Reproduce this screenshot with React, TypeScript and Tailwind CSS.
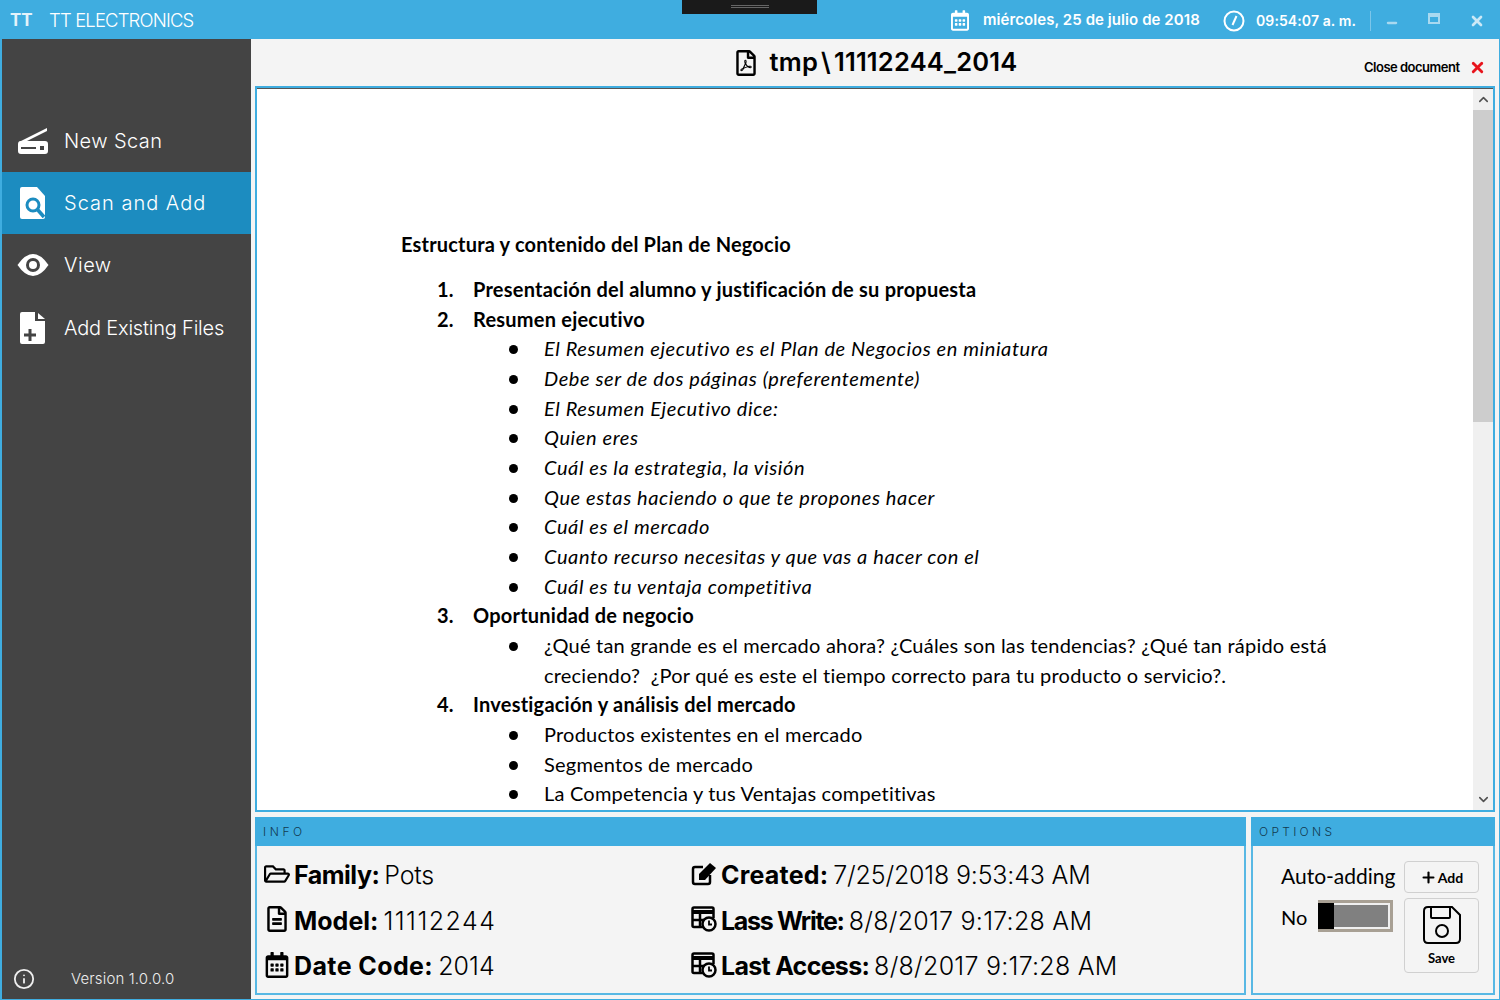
import React from 'react';
import { FaRegFolderOpen, FaRegFileAlt, FaRegCalendarAlt, FaRegFilePdf } from 'react-icons/fa';
import { ChevronUp, ChevronDown, Minus, X, Plus, Info } from 'lucide-react';

const gothic = { fontFamily: 'Inter, "Noto Sans", sans-serif' };

function ScannerIcon() {
  return (
    <svg viewBox="0 0 32 28" className="w-8 h-7" fill="white">
      <path d="M2 15 L30 1 V4 L8 15 Z" />
      <path fillRule="evenodd" d="M4 14 H28 Q31 14 31 17 V24 Q31 27 28 27 H4 Q1 27 1 24 V17 Q1 14 4 14 Z M4 20 V22 H19 V20 Z M23 19 V23 H27 V19 Z" />
    </svg>
  );
}

function FileSearchIcon() {
  return (
    <svg viewBox="0 0 26 32" className="w-[26px] h-8">
      <path d="M2 0 H17 L25 9 V30 Q25 32 23 32 H2 Q0 32 0 30 V2 Q0 0 2 0 Z" fill="white" />
      <circle cx="13" cy="18" r="6" fill="none" stroke="#1c8cc0" strokeWidth="3" />
      <path d="M17 22 L24 30" stroke="#1c8cc0" strokeWidth="3.5" />
    </svg>
  );
}

function EyeIcon() {
  return (
    <svg viewBox="0 0 32 22" className="w-8 h-[22px]">
      <path d="M0.5 11 Q8 0 16 0 Q24 0 31.5 11 Q24 22 16 22 Q8 22 0.5 11 Z" fill="white" />
      <circle cx="16" cy="11" r="7" fill="#444444" />
      <circle cx="16" cy="11" r="4" fill="white" />
    </svg>
  );
}

function FilePlusIcon() {
  return (
    <svg viewBox="0 0 26 32" className="w-[26px] h-8">
      <path d="M2 0 H15 V9 H25 V30 Q25 32 23 32 H2 Q0 32 0 30 V2 Q0 0 2 0 Z" fill="white" />
      <path d="M18 1 L25 7 H18 Z" fill="white" />
      <path d="M10 17 V29 M4 23 H16" stroke="#444444" strokeWidth="3" />
    </svg>
  );
}

function EditIcon() {
  return (
    <svg viewBox="0 0 26 24" className="w-[26px] h-[24px]">
      <path d="M12 5 H4 Q2 5 2 7 V20 Q2 22 4 22 H17 Q19 22 19 20 V13" fill="none" stroke="black" strokeWidth="2.5" />
      <path d="M8 12 L19 1 L25 6 L14 18 H8 Z" fill="black" />
    </svg>
  );
}

function TableClockIcon() {
  return (
    <svg viewBox="0 0 26 26" className="w-[26px] h-[26px]" fill="none" stroke="black">
      <path d="M12 21 H3 Q1.5 21 1.5 19.5 V3 Q1.5 1.5 3 1.5 H21 Q22.5 1.5 22.5 3 V12" strokeWidth="2.5" />
      <path d="M1.5 6 H22.5" strokeWidth="4" />
      <path d="M1.5 14 H13 M9 8 V21" strokeWidth="2.5" />
      <circle cx="18" cy="18" r="6.5" fill="#f4f4f4" strokeWidth="2.5" />
      <path d="M18 14.5 V18.5 H21" strokeWidth="1.8" />
    </svg>
  );
}

function SaveIcon() {
  return (
    <svg viewBox="0 0 38 38" className="w-[38px] h-[38px]" fill="none" stroke="black" strokeWidth="2">
      <path d="M5 1 H29 L37 9 V33 Q37 37 33 37 H5 Q1 37 1 33 V5 Q1 1 5 1 Z" />
      <path d="M8 1 V11 Q8 12 9 12 H26 Q27 12 27 11 V1" />
      <circle cx="19" cy="25" r="6" />
    </svg>
  );
}

function ClockIcon() {
  return (
    <svg viewBox="0 0 22 22" className="w-[22px] h-[22px]" fill="none" stroke="white" strokeWidth="2">
      <circle cx="11" cy="11" r="9.5" />
      <path d="M13.5 6 L9.5 15" />
    </svg>
  );
}

const navItems = [
  { label: 'New Scan', icon: <ScannerIcon />, active: false, tracking: 'tracking-[0.4px]' },
  { label: 'Scan and Add', icon: <FileSearchIcon />, active: true, tracking: 'tracking-[1px]' },
  { label: 'View', icon: <EyeIcon />, active: false, tracking: 'tracking-[0.5px]' },
  { label: 'Add Existing Files', icon: <FilePlusIcon />, active: false, tracking: 'tracking-[-0.2px]' },
];

function Row({ n, children }: { n: string; children: React.ReactNode }) {
  return (
    <div className="flex pl-[36px] font-bold tracking-[0.22px]">
      <span className="w-[36px]">{n}</span>
      <span>{children}</span>
    </div>
  );
}

function Bullet({ children, italic }: { children: React.ReactNode; italic?: boolean }) {
  return (
    <div className={`flex pl-[107px] ${italic ? 'italic tracking-[0.6px]' : 'tracking-[0.21px]'}`}>
      <span className="w-[36px]">
        <span className="block w-[9px] h-[9px] rounded-full bg-black ml-[1px] mt-[11px]" />
      </span>
      <span className="flex-1">{children}</span>
    </div>
  );
}

function InfoRow({ icon, label, value, labelClass, valueClass }: { icon: React.ReactNode; label: string; value: string; labelClass: string; valueClass: string }) {
  return (
    <div className="flex items-center h-[45.5px]">
      <span className="w-[30px] flex justify-start items-center -mt-1">{icon}</span>
      <span className={`font-bold mr-[5px] ${labelClass}`}>{label}</span>
      <span className={`font-light ${valueClass}`}>{value}</span>
    </div>
  );
}

export default function App() {
  return (
    <div className="w-[1500px] h-[1000px] bg-[#3fade0] flex flex-col overflow-hidden relative" style={gothic}>
      {/* title bar */}
      <div className="h-[39px] flex items-center text-white shrink-0">
        <span className="ml-[10px] w-[39px] text-[17px] font-bold text-[#e4f3fb] mt-[2px]">TT</span>
        <span className="text-[18.5px] font-light tracking-[-0.85px] mt-[3px]">TT ELECTRONICS</span>
        <div className="ml-auto flex items-center font-semibold text-[15px] mt-[2px]">
          <FaRegCalendarAlt className="w-[18px] h-[21px] mr-[14px]" />
          <span className="w-[240px] tracking-[0.07px]">miércoles, 25 de julio de 2018</span>
          <ClockIcon />
          <span className="ml-[11px] w-[114px] text-[14px] tracking-[0.1px]">09:54:07 a. m.</span>
          <span className="w-px h-[20px] bg-[#7cc6ea]" />
          <Minus className="w-[14px] h-[14px] ml-[14px] mt-1 text-[#a9d9f0]" strokeWidth={4} />
          <span className="w-[12px] h-[11px] ml-[29px] mb-1 border-2 border-t-4 border-[#a9d9f0]" />
          <X className="w-[16px] h-[16px] ml-[29px] mr-[15px] text-[#cbe8f6]" strokeWidth={4} />
        </div>
      </div>
      <div className="absolute left-[682px] top-0 w-[135px] h-[14px] bg-[#1a1a1a] flex justify-center pt-[5px]">
        <div className="w-[38px] h-[3px] border-y border-[#666666]" />
      </div>

      <div className="flex-1 flex pl-[2px] pr-[1px] pb-[1px] min-h-0">
        {/* sidebar */}
        <aside className="w-[249px] bg-[#444444] flex flex-col pt-[71px] pb-[9px] text-white">
          {navItems.map((item) => (
            <div
              key={item.label}
              className={`h-[62.2px] flex items-center text-[20px] font-light ${item.active ? 'bg-[#1c8cc0]' : ''}`}
            >
              <span className="w-[62px] flex justify-center">{item.icon}</span>
              <span className={item.tracking}>{item.label}</span>
            </div>
          ))}
          <div className="mt-auto flex items-center text-[15px] font-light text-[#eeeeee]">
            <Info className="w-[22px] h-[22px] ml-[11px]" strokeWidth={2} />
            <span className="ml-[36px] tracking-[0.15px]">Version 1.0.0.0</span>
          </div>
        </aside>

        {/* main */}
        <main className="flex-1 bg-[#f4f4f4] px-[4px] pb-[4px] flex flex-col min-w-0 text-black">
          <div className="h-[47px] relative flex items-center justify-center shrink-0 pl-[3px]">
            <FaRegFilePdf className="w-[20px] h-[26px] mr-[14px]" />
            <span className="text-[25.5px] font-semibold tracking-[0.2px]">
              tmp<span className="mx-[3px]">\</span>11112244_2014
            </span>
            <div className="absolute right-0 top-[16px] h-[25px] w-[135px] flex items-center text-[13px] font-semibold tracking-[-0.5px]">
              <span className="ml-[4px]">Close document</span>
              <X className="w-[17px] h-[17px] ml-[9px] text-[#e8141c]" strokeWidth={4} />
            </div>
          </div>

          {/* document */}
          <div className="h-[726px] border-2 border-[#3fade0] bg-white shrink-0 overflow-hidden">
            <div className="h-full border-t border-[#555555] flex">
              <div className="flex-1 pt-[141.4px] pl-[144px] pr-[140px] text-[20px] leading-[29.65px]" style={{ fontFamily: 'Lato, "Open Sans", sans-serif' }}>
                <div className="mb-[15px] font-bold tracking-[0.19px]">Estructura y contenido del Plan de Negocio</div>
                <Row n="1.">Presentación del alumno y justificación de su propuesta</Row>
                <Row n="2.">Resumen ejecutivo</Row>
                <Bullet italic>El Resumen ejecutivo es el Plan de Negocios en miniatura</Bullet>
                <Bullet italic>Debe ser de dos páginas (preferentemente)</Bullet>
                <Bullet italic>El Resumen Ejecutivo dice:</Bullet>
                <Bullet italic>Quien eres</Bullet>
                <Bullet italic>Cuál es la estrategia, la visión</Bullet>
                <Bullet italic>Que estas haciendo o que te propones hacer</Bullet>
                <Bullet italic>Cuál es el mercado</Bullet>
                <Bullet italic>Cuanto recurso necesitas y que vas a hacer con el</Bullet>
                <Bullet italic>Cuál es tu ventaja competitiva</Bullet>
                <Row n="3.">Oportunidad de negocio</Row>
                <Bullet>¿Qué tan grande es el mercado ahora? ¿Cuáles son las tendencias? ¿Qué tan rápido está creciendo?&nbsp; ¿Por qué es este el tiempo correcto para tu producto o servicio?.</Bullet>
                <Row n="4.">Investigación y análisis del mercado</Row>
                <Bullet>Productos existentes en el mercado</Bullet>
                <Bullet>Segmentos de mercado</Bullet>
                <Bullet>La Competencia y tus Ventajas competitivas</Bullet>
              </div>
              <div className="w-[20px] bg-[#f0f0f0] flex flex-col shrink-0">
                <div className="h-[21px] flex items-center justify-center text-[#505050]">
                  <ChevronUp className="w-[15px] h-[15px]" strokeWidth={2.5} />
                </div>
                <div className="h-[312px] bg-[#cdcdcd]" />
                <div className="mt-auto h-[21px] flex items-center justify-center text-[#505050]">
                  <ChevronDown className="w-[15px] h-[15px]" strokeWidth={2.5} />
                </div>
              </div>
            </div>
          </div>

          {/* bottom panels */}
          <div className="flex-1 flex gap-[5px] mt-[5px] min-h-0">
            <section className="flex-1 border-2 border-t-0 border-[#58b8e4] flex flex-col">
              <div className="h-[29px] bg-[#3fade0] -mx-[2px] pl-[8px] pt-[1px] flex items-center text-[12px] tracking-[3.6px] font-light text-[#123a50]">INFO</div>
              <div className="grid grid-cols-[427px_1fr] pl-[7px] pt-[7px] text-[25px]">
                <InfoRow icon={<FaRegFolderOpen className="w-[26px] h-[24px]" />} label="Family:" value="Pots" labelClass="tracking-[-0.5px]" valueClass="tracking-[-0.2px]" />
                <InfoRow icon={<EditIcon />} label="Created:" value="7/25/2018 9:53:43 AM" labelClass="tracking-[0.2px]" valueClass="tracking-[-0.18px]" />
                <InfoRow icon={<FaRegFileAlt className="w-[26px] h-[26px]" />} label="Model:" value="11112244" labelClass="" valueClass="tracking-[1.5px]" />
                <InfoRow icon={<TableClockIcon />} label="Lass Write:" value="8/8/2017 9:17:28 AM" labelClass="tracking-[-1.3px]" valueClass="tracking-[0.25px]" />
                <InfoRow icon={<FaRegCalendarAlt className="w-[26px] h-[26px]" />} label="Date Code:" value="2014" labelClass="tracking-[0.4px]" valueClass="tracking-[0.1px]" />
                <InfoRow icon={<TableClockIcon />} label="Last Access:" value="8/8/2017 9:17:28 AM" labelClass="tracking-[-0.7px]" valueClass="tracking-[0.25px]" />
              </div>
            </section>
            <section className="w-[244px] border-2 border-t-0 border-[#58b8e4] flex flex-col">
              <div className="h-[29px] bg-[#3fade0] -mx-[2px] pl-[8px] pt-[1px] flex items-center text-[12px] tracking-[3.3px] font-light text-[#123a50]">OPTIONS</div>
              <div className="flex pt-[15px] pl-[28px]" style={{ fontFamily: 'Lato, sans-serif' }}>
                <div className="w-[122px]">
                  <div className="h-[29px] flex items-center text-[21px]">Auto-adding</div>
                  <div className="flex items-center mt-[10px] h-[32px] text-[20px]">
                    <span className="w-[37px] mt-[2px]">No</span>
                    <div className="w-[75px] h-[32px] border-[3px] border-[#a8a094] border-l-0 bg-[#f0f0f0] flex">
                      <span className="w-[16px] h-full bg-black" />
                      <span className="flex-1 bg-[#808080] my-[2px] mr-[2px]" />
                    </div>
                  </div>
                </div>
                <div className="w-[75px] flex flex-col gap-[5px] ml-[1px]">
                  <div className="h-[32px] border border-[#d0d0d0] rounded-[4px] flex items-center justify-center font-bold text-[14px]">
                    <Plus className="w-[17px] h-[17px] mr-[1px]" strokeWidth={3} />Add
                  </div>
                  <div className="h-[75px] border border-[#d0d0d0] rounded-[4px] flex flex-col items-center pt-[7px] font-bold text-[13px]">
                    <SaveIcon />
                    <span className="mt-[5px]">Save</span>
                  </div>
                </div>
              </div>
            </section>
          </div>
        </main>
      </div>
    </div>
  );
}
